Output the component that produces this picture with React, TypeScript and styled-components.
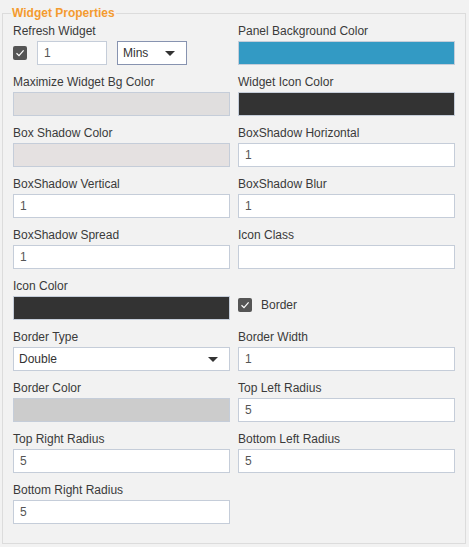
import styled, { createGlobalStyle } from 'styled-components';

const GlobalStyle = createGlobalStyle`
  html, body {
    margin: 0;
    padding: 0;
    background: #f2f2f2;
  }
  body {
    font-family: 'Liberation Sans', Arial, sans-serif;
    font-size: 12px;
    color: #333;
  }
`;

const Panel = styled.fieldset`
  box-sizing: border-box;
  width: 464px;
  height: 538px;
  margin: 6px 0 0 2px;
  padding: 4px 10px 0 10px;
  border: 1px solid #dcdcdc;
  min-width: 0;
`;

const Legend = styled.legend`
  margin-left: -2px;
  padding: 0 1px;
  font-size: 12px;
  line-height: 14px;
  font-weight: bold;
  color: #f49b2f;
`;

const Grid = styled.div`
  display: grid;
  grid-template-columns: 217px 217px;
  column-gap: 8px;
`;

const Field = styled.div`
  display: flex;
  flex-direction: column;
  height: 51px;
`;

const Label = styled.label`
  display: block;
  font-size: 12px;
  line-height: 14px;
  margin-bottom: 3px;
  color: #3a3a3a;
`;

const TextBox = styled.div<{ $w?: number }>`
  box-sizing: border-box;
  width: ${(p) => (p.$w ? `${p.$w}px` : '100%')};
  height: 24px;
  border: 1px solid #c5cdd9;
  background: #fff;
  padding: 0 6px;
  display: flex;
  align-items: center;
  font-size: 12px;
  color: #555;
`;

const Swatch = styled.div<{ $color: string }>`
  box-sizing: border-box;
  width: 100%;
  height: 24px;
  border: 1px solid #c5cdd9;
  background: ${(p) => p.$color};
`;

const SelectBox = styled.div<{ $w?: number; $dark?: boolean }>`
  box-sizing: border-box;
  width: ${(p) => (p.$w ? `${p.$w}px` : '100%')};
  height: 24px;
  border: 1px solid ${(p) => (p.$dark ? '#8793b0' : '#c5cdd9')};
  background: #fff;
  padding: 0 11px 0 5px;
  display: flex;
  align-items: center;
  justify-content: space-between;
  font-size: 12px;
  color: #333;
`;

const Caret = styled.span`
  width: 0;
  height: 0;
  border-left: 5px solid transparent;
  border-right: 5px solid transparent;
  border-top: 5px solid #333;
`;

const InlineRow = styled.div`
  display: flex;
  align-items: center;
  height: 24px;
  gap: 10px;
`;

const CheckRow = styled.div`
  display: flex;
  align-items: center;
  gap: 9px;
  height: 24px;
  margin-top: 14px;
  font-size: 12px;
  color: #3a3a3a;
`;

const Check = styled.span`
  box-sizing: border-box;
  width: 14px;
  height: 14px;
  border-radius: 2px;
  background: #555;
  display: inline-flex;
  align-items: center;
  justify-content: center;
  flex: none;
`;

const CheckBox = () => (
  <Check>
    <svg width="10" height="10" viewBox="0 0 10 10">
      <path d="M1.5 5.2 L4 7.6 L8.6 2.4" fill="none" stroke="#fff" strokeWidth="1.2" />
    </svg>
  </Check>
);

type Item =
  | { kind: 'text'; label: string; value: string }
  | { kind: 'color'; label: string; color: string }
  | { kind: 'select'; label: string; value: string }
  | { kind: 'check'; label: string }
  | { kind: 'refresh'; label: string }
  | { kind: 'empty' };

const items: Item[] = [
  { kind: 'refresh', label: 'Refresh Widget' },
  { kind: 'color', label: 'Panel Background Color', color: '#339ac4' },
  { kind: 'color', label: 'Maximize Widget Bg Color', color: '#e0dede' },
  { kind: 'color', label: 'Widget Icon Color', color: '#333333' },
  { kind: 'color', label: 'Box Shadow Color', color: '#e5e1e1' },
  { kind: 'text', label: 'BoxShadow Horizontal', value: '1' },
  { kind: 'text', label: 'BoxShadow Vertical', value: '1' },
  { kind: 'text', label: 'BoxShadow Blur', value: '1' },
  { kind: 'text', label: 'BoxShadow Spread', value: '1' },
  { kind: 'text', label: 'Icon Class', value: '' },
  { kind: 'color', label: 'Icon Color', color: '#333333' },
  { kind: 'check', label: 'Border' },
  { kind: 'select', label: 'Border Type', value: 'Double' },
  { kind: 'text', label: 'Border Width', value: '1' },
  { kind: 'color', label: 'Border Color', color: '#cccccc' },
  { kind: 'text', label: 'Top Left Radius', value: '5' },
  { kind: 'text', label: 'Top Right Radius', value: '5' },
  { kind: 'text', label: 'Bottom Left Radius', value: '5' },
  { kind: 'text', label: 'Bottom Right Radius', value: '5' },
  { kind: 'empty' },
];

const renderItem = (item: Item, i: number) => {
  switch (item.kind) {
    case 'refresh':
      return (
        <Field key={i}>
          <Label>{item.label}</Label>
          <InlineRow>
            <CheckBox />
            <TextBox $w={70}>1</TextBox>
            <SelectBox $w={70} $dark>
              Mins
              <Caret />
            </SelectBox>
          </InlineRow>
        </Field>
      );
    case 'color':
      return (
        <Field key={i}>
          <Label>{item.label}</Label>
          <Swatch $color={item.color} />
        </Field>
      );
    case 'select':
      return (
        <Field key={i}>
          <Label>{item.label}</Label>
          <SelectBox>
            {item.value}
            <Caret />
          </SelectBox>
        </Field>
      );
    case 'check':
      return (
        <Field key={i}>
          <CheckRow>
            <CheckBox />
            {item.label}
          </CheckRow>
        </Field>
      );
    case 'text':
      return (
        <Field key={i}>
          <Label>{item.label}</Label>
          <TextBox>{item.value}</TextBox>
        </Field>
      );
    default:
      return <Field key={i} />;
  }
};

const App = () => (
  <>
    <GlobalStyle />
    <Panel>
      <Legend>Widget Properties</Legend>
      <Grid>{items.map(renderItem)}</Grid>
    </Panel>
  </>
);

export default App;
